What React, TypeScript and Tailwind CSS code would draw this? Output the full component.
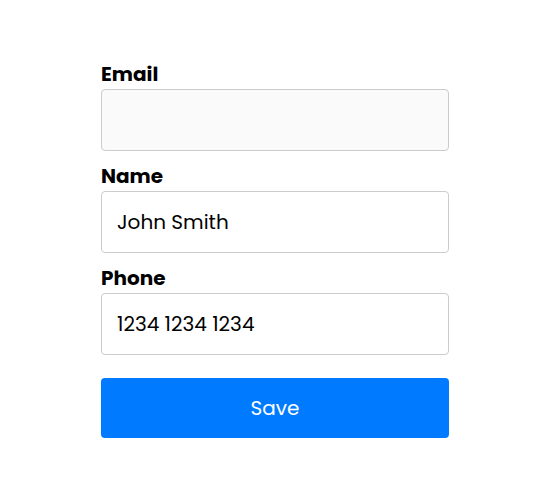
import React, { useState } from 'react';

const Field: React.FC<{
  label: string;
  value: string;
  onChange: (v: string) => void;
  muted?: boolean;
}> = ({ label, value, onChange, muted }) => (
  <div className="flex flex-col mb-[13px]">
    <label className="text-[20px] leading-[24px] font-bold text-black mb-[3px]">{label}</label>
    <input
      value={value}
      onChange={(e) => onChange(e.target.value)}
      className={`h-[62px] w-full rounded-[4px] border border-[#cccccc] px-[15px] text-[20px] text-black outline-none ${
        muted ? 'bg-[#fafafa]' : 'bg-white'
      }`}
    />
  </div>
);

export default function App() {
  const [email, setEmail] = useState('');
  const [name, setName] = useState('John Smith');
  const [phone, setPhone] = useState('1234 1234 1234');

  return (
    <div
      className="min-h-screen bg-white pt-[62px] pl-[101px]"
      style={{ fontFamily: 'Poppins, Inter, "Noto Sans", sans-serif' }}
    >
      <form className="w-[348px]" onSubmit={(e) => e.preventDefault()}>
        <Field label="Email" value={email} onChange={setEmail} muted />
        <Field label="Name" value={name} onChange={setName} />
        <Field label="Phone" value={phone} onChange={setPhone} />
        <button
          type="submit"
          className="mt-[10px] h-[60px] w-full rounded-[4px] bg-[#007bff] text-[20px] text-white"
        >
          Save
        </button>
      </form>
    </div>
  );
}
